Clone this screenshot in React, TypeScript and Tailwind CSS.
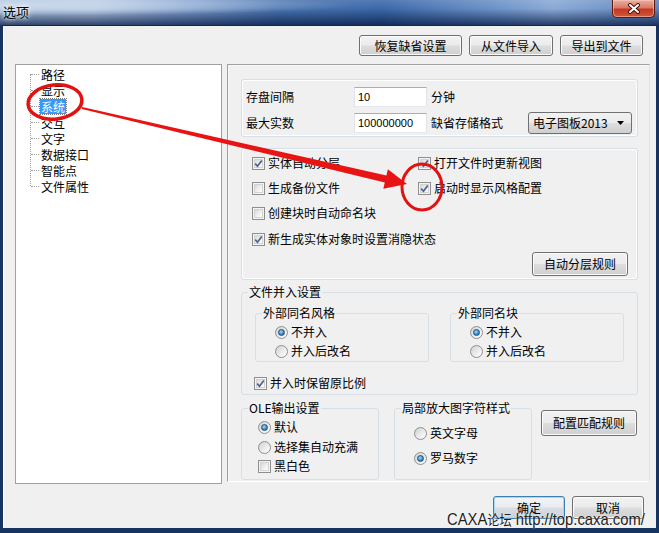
import React from 'react'

const btn =
  "flex items-center justify-center rounded-[3px] border border-[#707070] bg-[linear-gradient(180deg,#f2f2f2_0%,#ebebeb_48%,#dddddd_52%,#cfcfcf_100%)] shadow-[inset_0_0_0_1px_#fbfbfb] text-[12px] leading-none text-black"

const defBtn =
  "flex items-center justify-center rounded-[3px] border border-[#3c7fb1] bg-[linear-gradient(180deg,#f2f4f6_0%,#eaedf0_48%,#d9dee3_52%,#ccd3da_100%)] shadow-[inset_0_0_0_1px_#a5d8f6] text-[12px] leading-none text-black"

const treeItems = ['路径', '显示', '系统', '交互', '文字', '数据接口', '智能点', '文件属性']

function CheckBox({ checked }: { checked?: boolean }) {
  return (
    <span className="relative flex h-[13px] w-[13px] shrink-0 items-center justify-center border border-[#8e8f8f] bg-[#f4f4f4]">
      <span className="absolute inset-[1px] border border-[#d2d2d2] bg-[linear-gradient(135deg,#d9d9d9_0%,#f1f1f1_60%,#ffffff_100%)]" />
      {checked && (
        <svg className="relative" width="9" height="9" viewBox="0 0 9 9">
          <path d="M1.2 4.6 L3.5 7.2 L7.8 1.4" fill="none" stroke="#4c5f8f" strokeWidth="1.7" />
        </svg>
      )}
    </span>
  )
}

function Radio({ on }: { on?: boolean }) {
  return (
    <span className="flex h-[13px] w-[13px] shrink-0 items-center justify-center rounded-full border border-[#8e8f8f] bg-[linear-gradient(135deg,#cfcfcf_0%,#ececec_55%,#ffffff_100%)]">
      {on && (
        <span className="h-[7px] w-[7px] rounded-full border border-[#1d4f80] bg-[radial-gradient(circle_at_40%_35%,#a8dcf8_0%,#3f8ccb_55%,#1b5a94_100%)]" />
      )}
    </span>
  )
}

function Opt({ kind, on, label }: { kind: 'check' | 'radio'; on?: boolean; label: string }) {
  return (
    <div className="flex h-[16px] items-center gap-[3px] whitespace-nowrap leading-[16px]">
      {kind === 'check' ? <CheckBox checked={on} /> : <Radio on={on} />}
      <span>{label}</span>
    </div>
  )
}

function Group({ title, className, children }: { title: string; className: string; children: React.ReactNode }) {
  return (
    <fieldset className={className}>
      <legend className="ml-[6px] px-[1px] leading-[16px]">{title}</legend>
      {children}
    </fieldset>
  )
}

function TitleBar() {
  return (
    <div className="flex h-[25px] items-start bg-[radial-gradient(ellipse_at_0%_20%,rgba(205,218,236,0.95)_0%,rgba(205,218,236,0)_38%),linear-gradient(180deg,rgba(255,255,255,0.12)_0%,rgba(255,255,255,0)_35%,rgba(6,26,66,0.75)_100%),linear-gradient(90deg,#a9c1de_0%,#b4c9e3_14%,#7c9ccb_28%,#4a74b0_42%,#3c68a8_58%,#6f95c9_76%,#8aaad6_84%,#5d84bd_100%)]">
      <span className="ml-[3px] mt-[4px] text-[13px] leading-[16px] text-black [text-shadow:0_0_6px_#ffffff,0_0_3px_#ffffff]">
        选项
      </span>
      <div className="ml-auto mr-[4px] flex h-[18px] w-[43px] items-center justify-center rounded-b-[5px] border border-t-0 border-[#5a1a10] bg-[linear-gradient(180deg,#eab0a2_0%,#d9796a_45%,#c5391f_55%,#d0583a_100%)] shadow-[inset_0_0_0_1px_rgba(255,210,200,0.5)]">
        <svg width="14" height="11" viewBox="0 0 14 11">
          <path d="M3 2 L11 9 M11 2 L3 9" stroke="#4a1208" strokeWidth="4" strokeLinecap="round" />
          <path d="M3 2 L11 9 M11 2 L3 9" stroke="#ffffff" strokeWidth="2" strokeLinecap="round" />
        </svg>
      </div>
    </div>
  )
}

function Tree() {
  return (
    <div className="relative h-[420px] w-[207px] shrink-0 border border-[#a0a0a0] bg-white pt-[1px]">
      <div className="absolute left-[14px] top-[9px] h-[112px] border-l border-dotted border-[#a0a0a0]" />
      {treeItems.map((t) => (
        <div key={t} className="flex h-[16px] items-center">
          <span className="ml-[15px] w-[8px] border-t border-dotted border-[#a0a0a0]" />
          {t === '系统' ? (
            <span className="ml-[1px] bg-[#3399ff] px-[1px] leading-[15px] text-white outline outline-1 outline-dotted outline-[#7f7f7f]">
              {t}
            </span>
          ) : (
            <span className="ml-[1px] px-[1px] leading-[15px]">{t}</span>
          )}
        </div>
      ))}
    </div>
  )
}

function Settings() {
  return (
    <div className="ml-[5px] h-[418px] w-[423px] shrink-0 border border-[#a0a0a0] border-b-white border-r-[#e3e3e3] pl-[13px] pr-[11px] pt-[14px] shadow-[inset_1px_1px_0_#f8f8f8]">
      {/* save / limits */}
      <div className="flex h-[58px] flex-col rounded-[3px] border border-[#d5dfe5] pl-[4px] pt-[7px] shadow-[inset_0_0_0_1px_#ffffff]">
        <div className="flex h-[20px] items-center">
          <span className="w-[108px]">存盘间隔</span>
          <div className="flex h-[20px] w-[73px] items-center border border-[#abadb3] border-b-[#e3e9ef] border-x-[#e2e3ea] bg-white pl-[3px] font-['Liberation_Sans',sans-serif] text-[11px]">
            10
          </div>
          <span className="ml-[4px]">分钟</span>
        </div>
        <div className="mt-[5px] flex h-[22px] items-center">
          <span className="w-[108px]">最大实数</span>
          <div className="flex h-[20px] w-[73px] items-center border border-[#abadb3] border-b-[#e3e9ef] border-x-[#e2e3ea] bg-white pl-[3px] font-['Liberation_Sans',sans-serif] text-[11px]">
            100000000
          </div>
          <span className="ml-[4px]">缺省存储格式</span>
          <div className="ml-auto mr-[5px] flex h-[22px] w-[104px] items-center rounded-[3px] border border-[#707070] bg-[linear-gradient(180deg,#f2f2f2_0%,#ebebeb_48%,#dddddd_52%,#cfcfcf_100%)] pl-[4px] pr-[7px]">
            <span>电子图板2013</span>
            <svg className="ml-auto" width="7" height="4" viewBox="0 0 7 4">
              <path d="M0 0 L7 0 L3.5 4 Z" fill="#000" />
            </svg>
          </div>
        </div>
      </div>

      {/* checkboxes */}
      <div className="mt-[11px] flex h-[132px] flex-col rounded-[3px] border border-[#d5dfe5] pl-[10px] pr-[9px] pt-[6px] shadow-[inset_0_0_0_1px_#ffffff]">
        <div className="flex">
          <div className="w-[166px]">
            <Opt kind="check" on label="实体自动分层" />
          </div>
          <Opt kind="check" on label="打开文件时更新视图" />
        </div>
        <div className="mt-[9px] flex">
          <div className="w-[166px]">
            <Opt kind="check" label="生成备份文件" />
          </div>
          <Opt kind="check" on label="启动时显示风格配置" />
        </div>
        <div className="mt-[9px]">
          <Opt kind="check" label="创建块时自动命名块" />
        </div>
        <div className="mt-[10px]">
          <Opt kind="check" on label="新生成实体对象时设置消隐状态" />
        </div>
        <div className={`${btn} mt-[5px] h-[24px] w-[96px] self-end`}>自动分层规则</div>
      </div>

      {/* merge */}
      <Group title="文件并入设置" className="mt-[4px] h-[111px] rounded-[3px] border border-[#d5dfe5]">
        <div className="flex gap-[21px] pl-[13px] pt-[5px]">
          <Group title="外部同名风格" className="h-[57px] w-[174px] rounded-[3px] border border-[#d5dfe5]">
            <div className="flex flex-col gap-[3px] pl-[19px] pt-[3px]">
              <Opt kind="radio" on label="不并入" />
              <Opt kind="radio" label="并入后改名" />
            </div>
          </Group>
          <Group title="外部同名块" className="h-[57px] w-[174px] rounded-[3px] border border-[#d5dfe5]">
            <div className="flex flex-col gap-[3px] pl-[19px] pt-[3px]">
              <Opt kind="radio" on label="不并入" />
              <Opt kind="radio" label="并入后改名" />
            </div>
          </Group>
        </div>
        <div className="mt-[13px] pl-[12px]">
          <Opt kind="check" on label="并入时保留原比例" />
        </div>
      </Group>

      {/* bottom row */}
      <div className="mt-[5px] flex items-start">
        <Group title="OLE输出设置" className="h-[80px] w-[138px] shrink-0 rounded-[3px] border border-[#d5dfe5]">
          <div className="flex flex-col pl-[16px] pt-[3px]">
            <Opt kind="radio" on label="默认" />
            <div className="mt-[4px]">
              <Opt kind="radio" label="选择集自动充满" />
            </div>
            <div className="mt-[3px]">
              <Opt kind="check" label="黑白色" />
            </div>
          </div>
        </Group>
        <Group title="局部放大图字符样式" className="ml-[15px] h-[80px] w-[138px] shrink-0 rounded-[3px] border border-[#d5dfe5]">
          <div className="flex flex-col gap-[9px] pl-[19px] pt-[9px]">
            <Opt kind="radio" label="英文字母" />
            <Opt kind="radio" on label="罗马数字" />
          </div>
        </Group>
        <div className={`${btn} ml-[9px] mt-[10px] h-[26px] w-[96px]`}>配置匹配规则</div>
      </div>
    </div>
  )
}

export default function App() {
  return (
    <div className="relative h-[533px] w-[659px] overflow-hidden bg-[#16345f] font-['Noto_Sans_CJK_SC','Noto_Sans',sans-serif] text-[12px] text-black">
      <TitleBar />
      <div className="mx-[3px] flex h-[503px] flex-col border-t border-[#12284a] bg-[#f0f0f0] shadow-[inset_1px_0_0_#ffffff]">
        <div className="flex justify-end gap-[7px] pr-[13px] pt-[9px]">
          <div className={`${btn} h-[21px] w-[103px]`}>恢复缺省设置</div>
          <div className={`${btn} h-[21px] w-[84px]`}>从文件导入</div>
          <div className={`${btn} h-[21px] w-[83px]`}>导出到文件</div>
        </div>
        <div className="mt-[8px] flex items-start pl-[12px]">
          <Tree />
          <Settings />
        </div>
        <div className="mt-[12px] flex justify-end gap-[7px] pr-[12px]">
          <div className={`${defBtn} h-[23px] w-[72px]`}>确定</div>
          <div className={`${btn} h-[23px] w-[72px]`}>取消</div>
        </div>
      </div>

      {/* red annotation drawn over the dialog */}
      <svg className="pointer-events-none absolute inset-0" width="659" height="533" viewBox="0 0 659 533">
        <ellipse cx="55" cy="102" rx="27" ry="17" fill="none" stroke="#e31212" strokeWidth="3.5" transform="rotate(-6 55 102)" />
        <polygon
          points="82.2,107 386.4,175.6 387.9,169.3 407,184 383.3,188.7 384.8,182.4 81.8,109"
          fill="#e81414"
        />
        <ellipse cx="422" cy="187" rx="20" ry="23" fill="none" stroke="#e31212" strokeWidth="3" />
      </svg>

      {/* forum watermark */}
      <div className="pointer-events-none absolute left-[447px] top-[511px] origin-left scale-x-[0.87] whitespace-nowrap font-['Liberation_Sans',sans-serif] text-[17px] leading-[17px] text-[#1e1e1e] [text-shadow:0_0_2px_#ffffff]">
        CAXA<span className="font-['Noto_Sans_CJK_SC',sans-serif] text-[14px]">论坛</span> http://top.caxa.com/
      </div>
    </div>
  )
}
